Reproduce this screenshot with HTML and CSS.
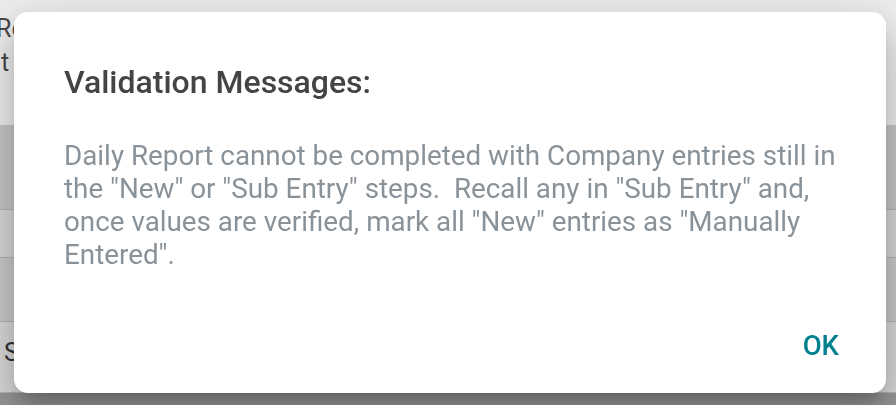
FILE: index.html
```html
<!DOCTYPE html>
<html lang="en">
<head>
    <meta charset="UTF-8">
    <title>Validation Messages</title>
    <link rel="stylesheet" href="styles.css">
</head>
<body>
    <div class="page">
        <header class="page-header">
            <div class="page-title">Re</div>
            <div class="page-sub">t</div>
        </header>
        <div class="row row-dark row-a"></div>
        <div class="row row-light row-b"></div>
        <div class="row row-dark row-c"></div>
        <div class="row row-light row-d"><span class="cell-text">S</span></div>
        <div class="row row-foot"></div>
    </div>

    <div class="backdrop"></div>

    <div class="dialog" role="dialog">
        <h2 class="dialog-title">Validation Messages:</h2>
        <div class="dialog-content">
            Daily Report cannot be completed with Company entries still in the "New" or "Sub Entry" steps.&nbsp; Recall any in "Sub Entry" and, once values are verified, mark all "New" entries as "Manually Entered".
        </div>
        <div class="dialog-actions">
            <button class="ok-btn">OK</button>
        </div>
    </div>
</body>
</html>
```

FILE: styles.css
```css
body {
    margin: 0;
    font-family: Roboto, "Noto Sans", sans-serif;
    background-color: #f3f3f3;
    overflow: hidden;
}

.page {
    display: flex;
    flex-direction: column;
    height: 405px;
}

.page-header {
    height: 125px;
    background-color: #f3f3f3;
    padding-top: 12px;
    box-sizing: border-box;
    color: #4a4a4a;
    font-size: 25px;
    line-height: 34px;
}

.page-title {
    margin-left: -4px;
}

.page-sub {
    margin-left: 1px;
}

.row {
    border-bottom: 1px solid #b8b8b8;
    box-sizing: border-box;
}

.row-a {
    height: 85px;
    background-color: #cbcbcb;
}

.row-b {
    height: 48px;
    background-color: #dcdcdc;
}

.row-c {
    height: 64px;
    background-color: #cfcfcf;
}

.row-d {
    height: 71px;
    background-color: #dedede;
    color: #333;
    font-size: 25px;
    padding-top: 16px;
    padding-left: 4px;
}

.row-foot {
    flex: 1;
    background-color: #9a9a9a;
    border-bottom: none;
}

.backdrop {
    position: fixed;
    inset: 0;
    background-color: rgba(0, 0, 0, 0.02);
}

.dialog {
    position: absolute;
    left: 14px;
    top: 12px;
    width: 872px;
    height: 381px;
    box-sizing: border-box;
    padding: 51px 40px 0 50px;
    background-color: #fff;
    border-radius: 14px;
    box-shadow: 0 11px 15px -7px rgba(0, 0, 0, .2),
        0 24px 38px 3px rgba(0, 0, 0, .14),
        0 9px 46px 8px rgba(0, 0, 0, .12);
    display: flex;
    flex-direction: column;
}

.dialog-title {
    margin: 0;
    font-size: 32px;
    font-weight: 500;
    line-height: 38px;
    color: #444;
}

.dialog-content {
    margin-top: 38px;
    font-size: 27.8px;
    line-height: 33px;
    color: #8a9299;
}

.dialog-actions {
    margin-top: auto;
    display: flex;
    justify-content: flex-end;
    padding-bottom: 31px;
}

.ok-btn {
    border: none;
    background: none;
    font-family: Roboto, sans-serif;
    font-size: 27.5px;
    font-weight: 500;
    color: #00818f;
    padding: 0;
    margin-right: 7px;
    line-height: 32px;
}
```
